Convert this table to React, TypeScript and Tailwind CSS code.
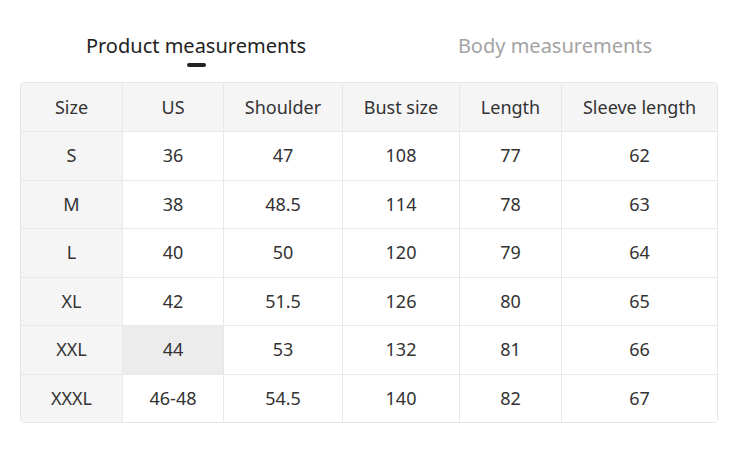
import React from "react";

const headers = ["Size", "US", "Shoulder", "Bust size", "Length", "Sleeve length"];
const rows = [
  ["S", "36", "47", "108", "77", "62"],
  ["M", "38", "48.5", "114", "78", "63"],
  ["L", "40", "50", "120", "79", "64"],
  ["XL", "42", "51.5", "126", "80", "65"],
  ["XXL", "44", "53", "132", "81", "66"],
  ["XXXL", "46-48", "54.5", "140", "82", "67"],
];
const widths = ["w-[102px]", "w-[101px]", "w-[119px]", "w-[117px]", "w-[102px]", "flex-1"];

export default function App() {
  return (
    <div
      className="w-[755px] h-[464px] bg-white text-[#333]"
      style={{ fontFamily: '"Noto Sans", "Open Sans", sans-serif' }}
    >
      <div className="flex pt-[31px] pl-[20px]">
        <div className="w-[352px] flex flex-col items-center">
          <div className="text-[20px] leading-[30px] text-[#222]">Product measurements</div>
          <div className="mt-[2px] w-[19px] h-[4px] rounded-full bg-[#222]" />
        </div>
        <div className="w-[366px] flex flex-col items-center">
          <div className="text-[20px] leading-[30px] text-[#a3a3a3]">Body measurements</div>
        </div>
      </div>
      <div className="mx-[20px] mt-[15px] w-[698px] border border-[#e6e6e6] rounded-[4px] overflow-hidden">
        <div className="flex h-[48px] bg-[#f5f5f5]">
          {headers.map((h, i) => (
            <div
              key={h}
              className={`${widths[i]} flex items-center justify-center text-[18px] ${i < 5 ? "border-r border-[#e8e8e8]" : ""}`}
            >
              {h}
            </div>
          ))}
        </div>
        {rows.map((r, ri) => (
          <div key={ri} className="flex h-[48.5px] border-t border-[#e8e8e8]">
            {r.map((c, ci) => (
              <div
                key={ci}
                className={`${widths[ci]} flex items-center justify-center text-[18px] ${ci < 5 ? "border-r border-[#e8e8e8]" : ""} ${
                  ci === 0 ? "bg-[#f5f5f5]" : ri === 4 && ci === 1 ? "bg-[#ececec]" : "bg-white"
                }`}
              >
                {c}
              </div>
            ))}
          </div>
        ))}
      </div>
    </div>
  );
}
